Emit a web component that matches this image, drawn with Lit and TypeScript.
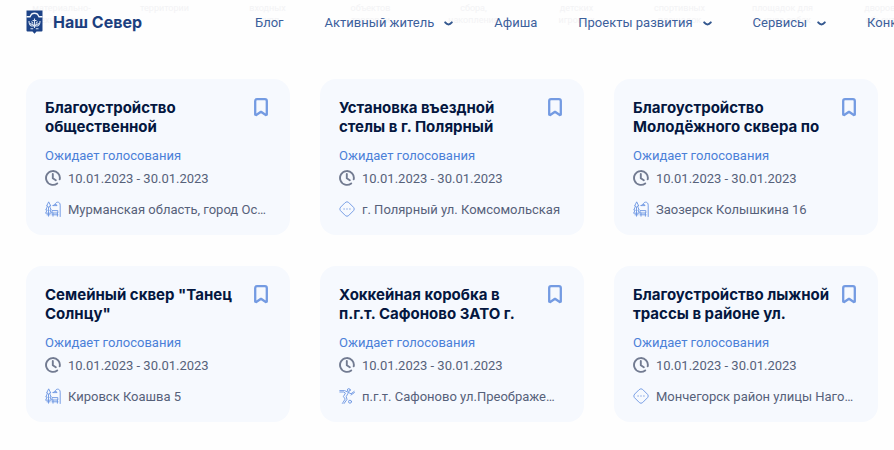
import { LitElement, html, css, svg, nothing } from "lit";
import { customElement, property } from "lit/decorators.js";

type Kind = "park" | "other" | "sport";

interface Project {
  title: string[];
  address: string;
  kind: Kind;
}

const PROJECTS: Project[] = [
  { title: ["Благоустройство", "общественной"], address: "Мурманская область, город Островной", kind: "park" },
  { title: ["Установка въездной", "стелы в г. Полярный"], address: "г. Полярный ул. Комсомольская", kind: "other" },
  { title: ["Благоустройство", "Молодёжного сквера по"], address: "Заозерск Колышкина 16", kind: "park" },
  { title: ["Семейный сквер \"Танец", "Солнцу\""], address: "Кировск Коашва 5", kind: "park" },
  { title: ["Хоккейная коробка в", "п.г.т. Сафоново ЗАТО г."], address: "п.г.т. Сафоново ул.Преображенского", kind: "sport" },
  { title: ["Благоустройство лыжной", "трассы в районе ул."], address: "Мончегорск район улицы Нагорной", kind: "other" },
];

const NAV = [
  { label: "Блог", menu: false },
  { label: "Активный житель", menu: true },
  { label: "Афиша", menu: false },
  { label: "Проекты развития", menu: true },
  { label: "Сервисы", menu: true },
  { label: "Конкурсы", menu: false },
];

const CATEGORIES = [
  ["материально-", "техническо-"],
  ["территории", ""],
  ["входных", "групп"],
  ["объектов", "торговли"],
  ["сбора,", "накопления"],
  ["детских", "игровых"],
  ["спортивных", "площадок"],
  ["площадок для", "выгула собак"],
  ["дворовых", "объектов"],
];

const KIND_ICONS = {
  park: svg`
    <path d="M3.5 1.2 L1.6 5 H2.6 L.8 9 H2.2 L.6 12.2 H6.4 L4.9 9 H6.2 L4.4 5 H5.4 Z M3.5 6 V15.2 M2 13.8 H5"/>
    <path d="M15.2 15.5 V4.2 C15.2 .2 10.4 .2 10.2 3.4 M8.2 4.6 H12 C12 2.8 8.4 2.8 8.2 4.6 Z"/>
    <path d="M7.4 9.6 H12.8 V12 H7.4 Z M8 12 V15.2 M12.4 12 V15.2 M7 13.8 H13"/>`,
  other: svg`
    <path d="M6.4 1.4 Q8 0 9.6 1.4 L14.6 6.4 Q16 8 14.6 9.6 L9.6 14.6 Q8 16 6.4 14.6 L1.4 9.6 Q0 8 1.4 6.4 Z"/>
    <path d="M4.8 8 H5.4 M7.7 8 H8.3 M10.6 8 H11.2"/>`,
  sport: svg`
    <circle cx="9.8" cy="2" r="1.4"/>
    <circle cx="11" cy="13.7" r="1.5"/>
    <path d="M.8 2.6 H5.6 L9 4.2 L12 5.8 L15.2 3.4 M.8 4 H4.8 L6.4 5.2 L4.4 8.6 L6.2 11 L3.4 15.4 M9 5.4 L7.2 8.6 L8 11.4 L5 15.6 M12 7 L15.4 4.6"/>`,
};

@customElement("project-card")
export class ProjectCard extends LitElement {
  @property({ attribute: false }) project!: Project;

  static styles = css`
    :host {
      display: block;
      min-width: 0;
      box-sizing: border-box;
      padding: 19px 19px 15px;
      border-radius: 16px;
      background: #f6f9fe;
      color: #56617a;
      font-size: 13px;
      line-height: 20px;
    }
    .head {
      display: flex;
      justify-content: space-between;
    }
    .title {
      margin: 0;
      color: #04173f;
      font-family: Inter, "Noto Sans", sans-serif;
      font-size: 15px;
      font-weight: 700;
      line-height: 19px;
      white-space: nowrap;
    }
    .line {
      display: block;
    }
    .mark {
      flex: none;
      width: 20px;
      height: 20px;
      padding: 0;
      border: 0;
      background: none;
      color: #749be2;
      cursor: pointer;
    }
    .status {
      margin: 10px 0 3px;
      color: #4b80d8;
    }
    .row {
      display: flex;
      align-items: center;
      gap: 7px;
      margin: 0;
      padding-right: 4px;
    }
    .place {
      margin-top: 11px;
    }
    .text {
      min-width: 0;
      overflow: hidden;
      text-overflow: ellipsis;
      white-space: nowrap;
    }
    svg {
      display: block;
      flex: none;
      fill: none;
      stroke: currentColor;
      stroke-linecap: round;
      stroke-linejoin: round;
    }
    .row svg {
      margin-bottom: 2px;
    }
    .clock {
      color: #727b91;
      stroke-width: 1.9;
    }
    .kind {
      color: #6a94e2;
      stroke-width: 0.9;
    }
    .flag {
      stroke-width: 2.3;
    }
  `;

  render() {
    const p = this.project;
    return html`
      <div class="head">
        <h3 class="title">${p.title.map((t) => html`<span class="line">${t}</span>`)}</h3>
        <button class="mark" type="button" aria-label="В закладки">
          <svg class="flag" width="20" height="20" viewBox="0 0 20 20">
            <path d="M4.2 16.6 V3 Q4.2 1.2 6 1.2 H14 Q15.8 1.2 15.8 3 V16.6 L14.8 17 L10 13.8 L5.2 17 Z"/>
          </svg>
        </button>
      </div>
      <p class="status">Ожидает голосования</p>
      <p class="row">
        <svg class="clock" width="16" height="16" viewBox="0 0 16 16">
          <path d="M12.2 13.4 A6.9 6.9 0 1 1 14.7 9.4 M7.8 4 V8.2 L10.8 10.2"/>
        </svg>
        <span class="text">10.01.2023 - 30.01.2023</span>
      </p>
      <p class="row place">
        <svg class="kind" width="16" height="16" viewBox="0 0 16 16">${KIND_ICONS[p.kind]}</svg>
        <span class="text">${p.address}</span>
      </p>
    `;
  }
}

@customElement("app-root")
export class AppRoot extends LitElement {
  static styles = css`
    :host {
      display: block;
      overflow: hidden;
      background: #fefefe;
      font-family: Roboto, Inter, sans-serif;
    }
    .header {
      position: relative;
      display: flex;
      align-items: center;
      height: 44px;
      padding-left: 26px;
      overflow: hidden;
      white-space: nowrap;
    }
    .under {
      position: absolute;
      top: 2px;
      left: 10px;
      display: grid;
      grid-template-columns: repeat(9, 103px);
      color: #f3f3f5;
      font-size: 9px;
      line-height: 12px;
      text-align: center;
    }
    .caption {
      display: block;
    }
    .brand {
      position: relative;
      display: flex;
      flex: none;
      align-items: center;
      gap: 10px;
      width: 229px;
      color: #1c3f7f;
      font-family: Inter, "Noto Sans", sans-serif;
      font-size: 16px;
      font-weight: 700;
      line-height: 24px;
      text-decoration: none;
    }
    .menu {
      position: relative;
      display: flex;
      gap: 41px;
      padding-top: 1px;
      font-size: 13px;
      font-weight: 400;
      line-height: 20px;
    }
    .item {
      display: flex;
      flex: none;
      align-items: center;
      gap: 10px;
      color: #3c609c;
      text-decoration: none;
    }
    .chevron {
      fill: none;
      stroke: #34588f;
      stroke-width: 2;
      stroke-linecap: round;
      stroke-linejoin: round;
    }
    .grid {
      display: grid;
      grid-template-columns: repeat(3, minmax(0, 1fr));
      gap: 31px 30px;
      padding: 35px 16px 28px 26px;
    }
  `;

  render() {
    return html`
      <header class="header">
        <div class="under" aria-hidden="true">
          ${CATEGORIES.map((c) => html`<div>${c.map((t) => html`<span class="caption">${t}</span>`)}</div>`)}
        </div>
        <a class="brand" href="#">
          <svg width="17" height="24" viewBox="0 0 17 24" aria-hidden="true">
            <path fill="#1d4387" d="M.5 .5 H16.5 V20.5 Q16.5 21.5 15.5 21.5 H10.5 L8.5 23.7 L6.5 21.5 H1.5 Q.5 21.5 .5 20.5 Z"/>
            <path fill="none" stroke="#f4f7fc" stroke-width="1.4" d="M.5 6.8 H4 L5.5 4.2 Q8.5 2.2 11.5 4.2 L13 6.8 H16.5"/>
            <path fill="none" stroke="#dce5f3" stroke-width="1.1" d="M8.5 8.5 V18 M6.5 10.5 H10.5 M3 11 Q3 15 5.5 16 H11.5 Q14 15 14 11 M4 13.5 L8.5 15.5 L13 13.5 M5.5 11.5 L7 13.5 M11.5 11.5 L10 13.5 M4.5 18.8 H7.2 M9.8 18.8 H12.5"/>
          </svg>
          <span>Наш Север</span>
        </a>
        <nav class="menu">
          ${NAV.map(
            (n) => html`<a class="item" href="#">
              <span>${n.label}</span>
              ${n.menu
                ? html`<svg class="chevron" width="9" height="6" viewBox="0 0 9 6" aria-hidden="true">
                    <path d="M1.2 2.4 Q4.5 6.4 7.8 2.4"/>
                  </svg>`
                : nothing}
            </a>`,
          )}
        </nav>
      </header>
      <main class="grid">
        ${PROJECTS.map((p) => html`<project-card .project=${p}></project-card>`)}
      </main>
    `;
  }
}
